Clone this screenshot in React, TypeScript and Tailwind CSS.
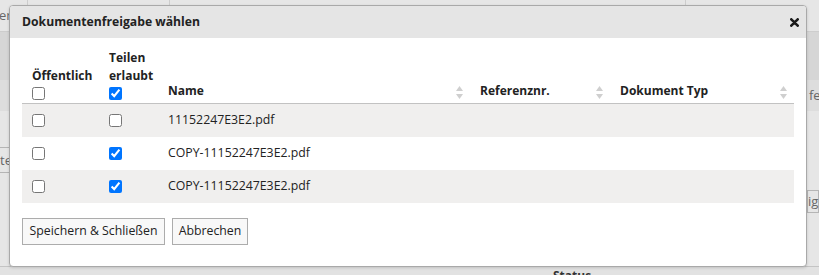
import React from 'react'

type Doc = {
  id: number
  name: string
  publicShare: boolean
  shareAllowed: boolean
}

const docs: Doc[] = [
  { id: 1, name: '11152247E3E2.pdf', publicShare: false, shareAllowed: false },
  { id: 2, name: 'COPY-11152247E3E2.pdf', publicShare: false, shareAllowed: true },
  { id: 3, name: 'COPY-11152247E3E2.pdf', publicShare: false, shareAllowed: true },
]

const cols = 'grid grid-cols-[77px_59px_312px_140px_184px]'

function SortIcon() {
  return (
    <svg width="7" height="13" viewBox="0 0 7 13" className="shrink-0">
      <polygon points="3.5,0 7,5 0,5" fill="#cfcfcf" />
      <polygon points="0,8 7,8 3.5,13" fill="#cfcfcf" />
    </svg>
  )
}

function SortHeader({ label }: { label: string }) {
  return (
    <div className="flex items-end justify-between pl-[10px] pr-[7px]">
      <span className="leading-[18px]">{label}</span>
      <span className="mb-[1px]"><SortIcon /></span>
    </div>
  )
}

export default function App() {
  return (
    <div
      className="relative h-[275px] w-[819px] overflow-hidden bg-[#e6e6e6] text-[#222]"
      style={{ fontFamily: '"Open Sans", "Noto Sans", Arial, sans-serif' }}
    >
      {/* page behind the overlay */}
      <div className="flex h-[32px] border-b border-[#cdcdcd] text-[13px] text-[#666]">
        <div className="w-[28px] border-r border-[#cdcdcd] leading-[30px]">
          <span className="-ml-[1px]">er</span>
        </div>
        <div className="w-[142px] border-r border-[#cdcdcd]" />
        <div className="w-[516px] border-r border-[#cdcdcd]" />
        <div className="flex-1" />
      </div>
      <div className="h-[48px] bg-[#d6d6d6]" />
      <div className="flex h-[31px] justify-end bg-[#dddddd] text-[13px] leading-[31px] text-[#666]">
        <span className="w-[10px]">fe</span>
      </div>
      <div className="flex h-[156px] items-start justify-between border-b border-[#c4c4c4] text-[13px] text-[#666]">
        <div className="mt-[36px] h-[26px] w-[14px] border-y border-[#b5b5b5] leading-[24px]">te</div>
        <div className="mt-[79px] h-[23px] w-[12px] border border-[#b5b5b5] leading-[21px]">ig</div>
      </div>
      <div className="bg-[#e2e2e2] pl-[553px] pt-[2px] text-[12px] font-bold leading-[14px] text-[#333]">Status</div>

      {/* dialog */}
      <div className="absolute left-[9px] top-[5px] flex h-[262px] w-[798px] flex-col overflow-hidden rounded-[4px] border border-[#a9a9a9] bg-white shadow-[0_1px_3px_rgba(0,0,0,0.15)]">
        <div className="flex h-[32px] shrink-0 items-center justify-between bg-[#e5e5e5] pl-[12px] pr-[7px]">
          <span className="text-[12.2px] font-bold">Dokumentenfreigabe wählen</span>
          <svg width="9" height="9" viewBox="0 0 9 9">
            <path d="M1.3 1.3L7.7 7.7M7.7 1.3L1.3 7.7" stroke="#1a1a1a" strokeWidth="2.6" strokeLinecap="round" />
          </svg>
        </div>

        <div className="px-[12px] pt-[11px]">
          {/* table header */}
          <div className={`${cols} items-end border-b border-[#c2c2c2] pb-[3px] text-[12px] font-bold`}>
            <div className="flex flex-col items-start pl-[10px]">
              <span className="leading-[18px]">Öffentlich</span>
              <input type="checkbox" className="mt-[2px] h-[13px] w-[13px]" />
            </div>
            <div className="flex flex-col items-start pl-[10px]">
              <span className="leading-[18px]">Teilen</span>
              <span className="leading-[18px]">erlaubt</span>
              <input type="checkbox" defaultChecked className="mt-[2px] h-[13px] w-[13px]" />
            </div>
            <SortHeader label="Name" />
            <SortHeader label="Referenznr." />
            <SortHeader label="Dokument Typ" />
          </div>

          {/* rows */}
          {docs.map((doc, i) => (
            <div
              key={doc.id}
              className={`${cols} h-[33px] items-center text-[12.3px] ${i % 2 === 0 ? 'bg-[#f0efee]' : 'bg-white'}`}
            >
              <div className="flex pl-[10px]">
                <input type="checkbox" defaultChecked={doc.publicShare} className="h-[13px] w-[13px]" />
              </div>
              <div className="flex pl-[10px]">
                <input type="checkbox" defaultChecked={doc.shareAllowed} className="h-[13px] w-[13px]" />
              </div>
              <div className="pl-[10px]">{doc.name}</div>
              <div />
              <div />
            </div>
          ))}

          <div className="mt-[15px] flex gap-[7px]">
            <button className="h-[27px] w-[143px] border border-[#acacac] bg-[#f8f8f8] text-[12.3px] text-[#222]">
              Speichern &amp; Schließen
            </button>
            <button className="h-[27px] w-[76px] border border-[#acacac] bg-[#f8f8f8] text-[12.3px] text-[#222]">
              Abbrechen
            </button>
          </div>
        </div>
      </div>
    </div>
  )
}
